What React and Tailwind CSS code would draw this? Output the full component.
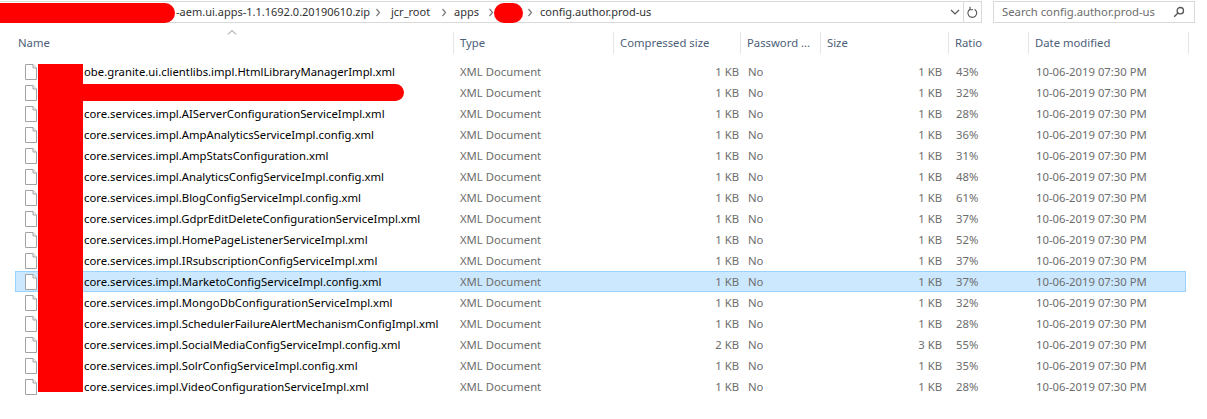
import React from "react";

const files = [
  ["obe.granite.ui.clientlibs.impl.HtmlLibraryManagerImpl.xml", "1 KB", "1 KB", "43%"],
  ["", "1 KB", "1 KB", "32%"],
  ["core.services.impl.AIServerConfigurationServiceImpl.xml", "1 KB", "1 KB", "28%"],
  ["core.services.impl.AmpAnalyticsServiceImpl.config.xml", "1 KB", "1 KB", "36%"],
  ["core.services.impl.AmpStatsConfiguration.xml", "1 KB", "1 KB", "31%"],
  ["core.services.impl.AnalyticsConfigServiceImpl.config.xml", "1 KB", "1 KB", "48%"],
  ["core.services.impl.BlogConfigServiceImpl.config.xml", "1 KB", "1 KB", "61%"],
  ["core.services.impl.GdprEditDeleteConfigurationServiceImpl.xml", "1 KB", "1 KB", "37%"],
  ["core.services.impl.HomePageListenerServiceImpl.xml", "1 KB", "1 KB", "52%"],
  ["core.services.impl.IRsubscriptionConfigServiceImpl.xml", "1 KB", "1 KB", "37%"],
  ["core.services.impl.MarketoConfigServiceImpl.config.xml", "1 KB", "1 KB", "37%", true],
  ["core.services.impl.MongoDbConfigurationServiceImpl.xml", "1 KB", "1 KB", "32%"],
  ["core.services.impl.SchedulerFailureAlertMechanismConfigImpl.xml", "1 KB", "1 KB", "28%"],
  ["core.services.impl.SocialMediaConfigServiceImpl.config.xml", "2 KB", "3 KB", "55%"],
  ["core.services.impl.SolrConfigServiceImpl.config.xml", "1 KB", "1 KB", "35%"],
  ["core.services.impl.VideoConfigurationServiceImpl.xml", "1 KB", "1 KB", "28%"],
];

const Chevron = () => (
  <svg width="6" height="9" viewBox="0 0 6 9" fill="none" stroke="#7a7a7a" strokeWidth="1.2">
    <path d="M1.5 1l3 3.5-3 3.5" />
  </svg>
);

const FileIcon = () => (
  <svg width="14" height="16" viewBox="0 0 14 16" fill="#fff" stroke="#a3a3a3" strokeWidth="1" className="shrink-0">
    <path d="M1.5.5h7.5l3.5 3.5v11.5h-11z" />
    <path d="M9 .5v3.5h3.5" fill="#f2f2f2" />
  </svg>
);

const HeaderCell = ({ children }) => (
  <div className="flex h-[22px] items-center border-r border-[#e5e5e5] pl-[6px]">{children}</div>
);

const App = () => {
  return (
    <div
      className="relative h-[419px] w-[1207px] overflow-hidden bg-white text-[11.3px] leading-[16px] text-[#6d6d6d]"
      style={{ fontFamily: '"Noto Sans", "Open Sans", sans-serif' }}
    >
      {/* address + search */}
      <div className="flex h-[24px] items-start pt-[1px]">
        <div className="flex h-[22px] w-[982px] items-center border-y border-r border-[#d9d9d9] text-[11px] text-[#333]">
          <span className="ml-[176px] w-[194px] whitespace-nowrap">-aem.ui.apps-1.1.1692.0.20190610.zip</span>
          <span className="ml-[5px]"><Chevron /></span>
          <span className="ml-[10px] w-[42px]">jcr_root</span>
          <span className="ml-[8px]"><Chevron /></span>
          <span className="ml-[7px] w-[28px]">apps</span>
          <span className="ml-[6px]"><Chevron /></span>
          <span className="ml-[33px]"><Chevron /></span>
          <span className="ml-[7px] whitespace-nowrap">config.author.prod-us</span>
          <div className="ml-auto flex h-full items-center">
            <svg width="10" height="6" viewBox="0 0 10 6" fill="none" stroke="#555" strokeWidth="1.2" className="mr-[3px]">
              <path d="M1 1l4 4 4-4" />
            </svg>
            <div className="flex h-full w-[18px] items-center justify-center border-l border-[#d9d9d9]">
              <svg width="11" height="13" viewBox="0 0 11 13" fill="none" stroke="#555" strokeWidth="1.1">
                <path d="M3 3.2a4.4 4.4 0 1 0 4.6 0" />
                <path d="M3 .8v3h3" />
              </svg>
            </div>
          </div>
        </div>
        <div className="ml-[11px] flex h-[22px] w-[202px] items-center justify-between border border-[#d9d9d9] pl-[8px] pr-[9px]">
          <span>Search config.author.prod-us</span>
          <svg width="12" height="12" viewBox="0 0 12 12" fill="none" stroke="#555" strokeWidth="1.3">
            <circle cx="7.3" cy="4.7" r="3.2" />
            <path d="M5 7l-3.8 3.8" />
          </svg>
        </div>
      </div>

      {/* column headers */}
      <div className="mt-[8px] grid grid-cols-[454px_160px_127px_80px_128px_80px_160px] text-[#4c607a]">
        <HeaderCell><span className="ml-[12px]">Name</span></HeaderCell>
        <HeaderCell>Type</HeaderCell>
        <HeaderCell>Compressed size</HeaderCell>
        <HeaderCell>Password ...</HeaderCell>
        <HeaderCell>Size</HeaderCell>
        <HeaderCell>Ratio</HeaderCell>
        <HeaderCell>Date modified</HeaderCell>
      </div>
      <svg width="10" height="5" viewBox="0 0 10 5" fill="none" stroke="#8a8a8a" className="absolute left-[227px] top-[30px]">
        <path d="M1 4.5l4-4 4 4" />
      </svg>

      {/* file rows */}
      <div className="mt-[7px] ml-[15px] w-[1171px]">
        {files.map(([name, compressed, size, ratio, selected], i) => (
          <div
            key={i}
            className={`grid h-[21px] grid-cols-[439px_160px_127px_80px_128px_80px_157px] items-center ${selected ? "bg-[#cce8ff] shadow-[inset_0_0_0_1px_#99d1ff]" : ""}`}
          >
            <div className="flex items-center pl-[9px] text-black">
              <FileIcon />
              <span className="ml-[46px] whitespace-nowrap">{name}</span>
            </div>
            <div className="pl-[6px]">XML Document</div>
            <div className="pr-[2px] text-right">{compressed}</div>
            <div className="pl-[7px]">No</div>
            <div className="pr-[7px] text-right">{size}</div>
            <div className="pl-[7px]">{ratio}</div>
            <div className="pl-[7px]">10-06-2019 07:30 PM</div>
          </div>
        ))}
      </div>

      {/* red redaction marks */}
      <div className="absolute -left-[10px] top-[3px] h-[20px] w-[185px] rounded-full bg-[#ff0000]" />
      <div className="absolute left-[494px] top-[3px] h-[20px] w-[29px] rounded-full bg-[#ff0000]" />
      <div className="absolute left-[60px] top-[84px] h-[17px] w-[344px] rounded-full bg-[#ff0000]" />
      <div className="absolute left-[38px] top-[64px] h-[328px] w-[45px] bg-[#ff0000]" />
    </div>
  );
};

export default App;
